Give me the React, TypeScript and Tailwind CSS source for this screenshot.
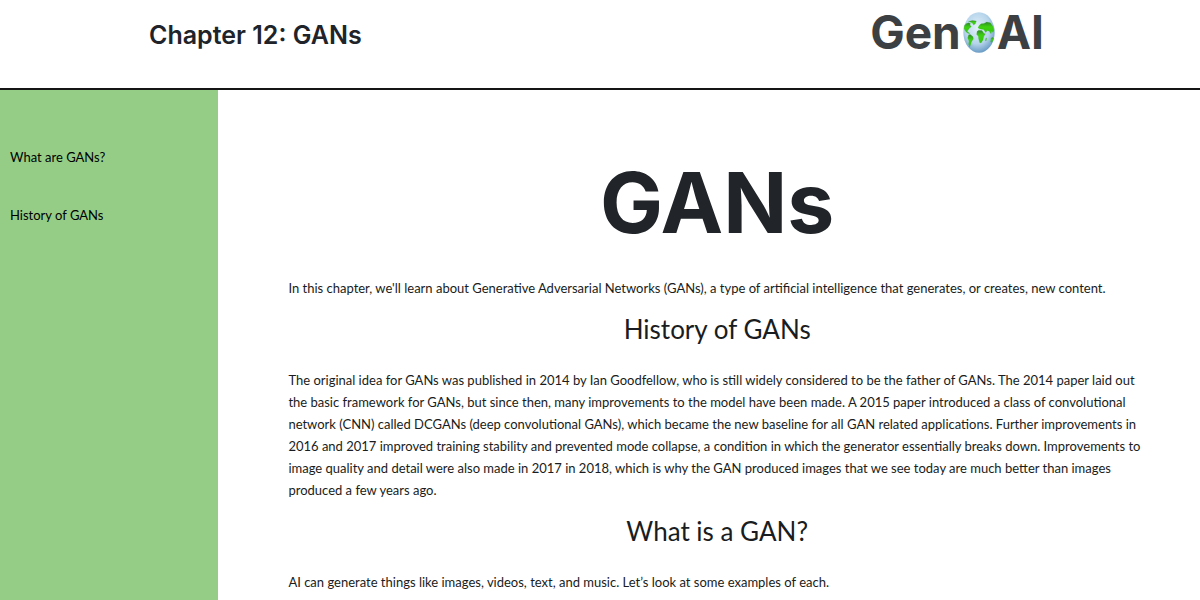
const links = [
  { label: 'What are GANs?', href: '#what' },
  { label: 'History of GANs', href: '#history' },
];

function Globe() {
  return (
    <svg viewBox="0 0 96 122" className="h-[41px] w-8" role="img" aria-label="Globe" preserveAspectRatio="none">
      <defs>
        <radialGradient id="sea" cx="45%" cy="38%" r="62%">
          <stop offset="0" stopColor="#e3f1fa" />
          <stop offset="0.65" stopColor="#b5d4ea" />
          <stop offset="1" stopColor="#6c9dc6" />
        </radialGradient>
        <linearGradient id="land" x1="0" y1="0" x2="0" y2="1">
          <stop offset="0" stopColor="#2f8a2a" />
          <stop offset="0.4" stopColor="#3ed010" />
          <stop offset="1" stopColor="#35c512" />
        </linearGradient>
      </defs>
      <ellipse cx="48" cy="61" rx="47" ry="60" fill="url(#sea)" />
      <g fill="url(#land)" stroke="#2c9a22" strokeWidth="0.5">
        <path d="M4 41l5-6 8-3 5 2-1 5 4 5-6 4-3 5-4 4 4 3 4 3-1 2-7-3-6-7-3-7z" />
        <path d="M16 28l12-3 12 2-3 8-5 4-4-6-7-3z" />
        <path d="M17 68l5-1 8 7 1 6-6 9-2 8-3 8-3-9 1-10-4-9z" />
        <path d="M42 58l5-4 10 1 6 9 4 1-5 9-2 9-6 9-4-1-3-11-1-8-5-5z" />
        <path d="M45 47l3-6 6-6 9-1 8-4 11 2 7 10 4 12-3 7-4-5-2 9-5-8-6-2-5 6-6-9-7-1-6-1z" />
        <path d="M84 79l4-4 4 4-5 12-4-2z" />
        <path d="M68 79l3-2-1 8-3 1z" />
      </g>
    </svg>
  );
}

export default function App() {
  return (
    <div className="flex min-h-screen flex-col bg-white font-['Lato',sans-serif] text-[13px] text-[#191c20]">
      <header className="flex h-[90px] items-start justify-between border-b-2 border-[#151515] pr-[156px] pl-[149px] font-['Inter',sans-serif]">
        <p className="pt-[19px] text-[25px] leading-8 font-semibold text-[#20242a]">Chapter 12: GANs</p>
        <a href="#top" className="flex items-center gap-0.5 pt-3 text-[46px] leading-[41px] font-bold text-[#3c4043]">
          <span>Gen</span>
          <Globe />
          <span>AI</span>
        </a>
      </header>
      <div className="flex flex-1">
        <nav className="flex w-[18.2%] shrink-0 flex-col gap-9 bg-[#95cd86] px-[10px] pt-14 leading-[22px] text-black">
          {links.map((l) => (
            <a key={l.href} href={l.href}>{l.label}</a>
          ))}
        </nav>
        <main id="top" className="min-w-0 flex-1 pt-[63px] pr-[54px] pl-[70px] leading-[22px]">
          <h1 className="text-center font-['Inter',sans-serif] text-[84px] leading-[100px] font-bold text-[#212529]">GANs</h1>
          <p id="what" className="mt-6">
            In this chapter, we'll learn about Generative Adversarial Networks (GANs), a type of artificial intelligence that generates, or creates, new content.
          </p>
          <h2 id="history" className="mt-3 text-center text-[26px] leading-9">History of GANs</h2>
          <p className="mt-[22px]">
            The original idea for GANs was published in 2014 by Ian Goodfellow, who is still widely considered to be the father of GANs. The 2014 paper laid out the basic framework for GANs, but since then, many improvements to the model have been made. A 2015 paper introduced a class of convolutional network (CNN) called DCGANs (deep convolutional GANs), which became the new baseline for all GAN related applications. Further improvements in 2016 and 2017 improved training stability and prevented mode collapse, a condition in which the generator essentially breaks down. Improvements to image quality and detail were also made in 2017 in 2018, which is why the GAN produced images that we see today are much better than images produced a few years ago.
          </p>
          <h2 className="mt-3 text-center text-[26px] leading-9">What is a GAN?</h2>
          <p className="mt-[22px]">AI can generate things like images, videos, text, and music. Let’s look at some examples of each.</p>
        </main>
      </div>
    </div>
  );
}
